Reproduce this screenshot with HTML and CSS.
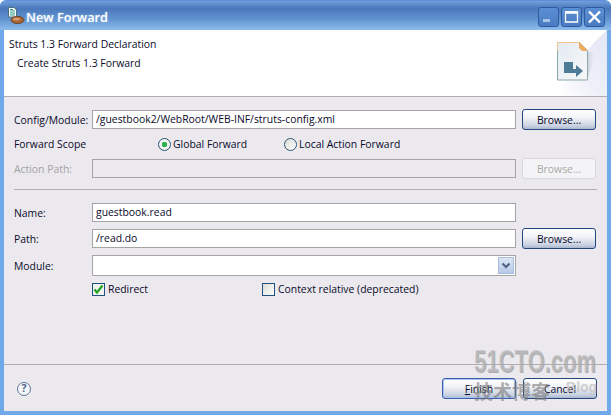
FILE: index.html
```html
<!DOCTYPE html>
<html lang="en">
<head>
<meta charset="utf-8">
<title>New Forward</title>
<link rel="stylesheet" href="styles.css">
</head>
<body>
<div class="window">
  <header class="titlebar">
    <svg class="app-icon" width="18" height="20" viewBox="0 0 18 20">
      <path d="M1.500 1.500H7l2.500 2.500V11H1.500z" fill="#fff" stroke="#4d6f7e"/>
      <path d="M3 5h5M3 7h5M3 9h5M3 3.500h3" stroke="#2a9a8a"/>
      <ellipse cx="10.500" cy="14" rx="6.500" ry="3.500" fill="#a9683a" stroke="#6e3f22"/>
      <ellipse cx="9.500" cy="13" rx="3.500" ry="1.300" fill="#d8a070"/>
    </svg>
    <span class="title">New Forward</span>
    <div class="controls">
      <span class="ctl"><svg width="21" height="20" viewBox="0 0 21 20"><rect x="5" y="12" width="7" height="3" fill="#a9c4e8"/></svg></span>
      <span class="ctl"><svg width="21" height="20" viewBox="0 0 21 20"><path d="M4.500 5h12v10h-12z" fill="none" stroke="#fff" stroke-width="1.300"/><path d="M4.500 5.500h12" stroke="#fff" stroke-width="2.500"/></svg></span>
      <span class="ctl"><svg width="21" height="20" viewBox="0 0 21 20"><path d="M5 4.500l11 11M16 4.500l-11 11" stroke="#fff" stroke-width="2.400"/></svg></span>
    </div>
  </header>
  <div class="client">
    <section class="banner">
      <div class="banner-text">
        <div class="banner-title">Struts 1.3 Forward Declaration</div>
        <div class="banner-sub">Create Struts 1.3 Forward</div>
      </div>
      <svg class="banner-art" width="70" height="66" viewBox="0 0 70 66">
        <defs>
          <linearGradient id="sweep" x1="0" y1="1" x2="1" y2="0">
            <stop offset="0" stop-color="#fff"/>
            <stop offset="0.450" stop-color="#eef0f9"/>
            <stop offset="1" stop-color="#e2e6f5"/>
          </linearGradient>
          <linearGradient id="page" x1="0" y1="0" x2="1" y2="1">
            <stop offset="0" stop-color="#e4ebf3"/>
            <stop offset="1" stop-color="#f7f7f7"/>
          </linearGradient>
          <linearGradient id="shade" x1="0" y1="0" x2="1" y2="0">
            <stop offset="0" stop-color="#c9cbd6"/>
            <stop offset="1" stop-color="#eef0f9" stop-opacity="0"/>
          </linearGradient>
        </defs>
        <path d="M22 66C28 46 52 16 70 0V66z" fill="url(#sweep)"/>
        <path d="M50 22h10L50 50z" fill="url(#shade)"/>
        <path d="M20.500 12.500h22l8 8v29.500h-30z" fill="url(#page)" stroke="#8ba8aa"/>
        <path d="M20.500 12.500h22M20.500 12.500v8" stroke="#f0c48c"/>
        <path d="M42 12l9 9h-6l-3-3z" fill="#f0ab5c"/>
        <path d="M27 32h9v7h3v-4l7 6-7 6v-4H27z" fill="#4f7b96"/>
      </svg>
    </section>
    <main class="body">
      <div class="form form-top">
        <label class="lbl">Config/Module:</label>
        <div class="field">/guestbook2/WebRoot/WEB-INF/struts-config.xml</div>
        <button class="btn">Browse...</button>

        <span class="lbl">Forward Scope</span>
        <div class="scope">
          <span class="opt opt-global"><span class="radio on"></span>Global Forward</span>
          <span class="opt"><span class="radio"></span>Local Action Forward</span>
        </div>

        <label class="lbl off">Action Path:</label>
        <div class="field field-off"></div>
        <button class="btn btn-off" disabled>Browse...</button>
      </div>
      <hr class="sep">
      <div class="form form-bottom">
        <label class="lbl">Name:</label>
        <div class="field">guestbook.read</div>
        <span></span>

        <label class="lbl">Path:</label>
        <div class="field">/read.do</div>
        <button class="btn">Browse...</button>

        <label class="lbl">Module:</label>
        <div class="field combo">
          <span class="combo-arrow"><svg width="16" height="17" viewBox="0 0 16 17"><path d="M4.500 6.500L8 10l3.500-3.500" fill="none" stroke="#4d6185" stroke-width="2"/></svg></span>
        </div>
        <span></span>

        <span></span>
        <div class="checks">
          <span class="opt opt-redirect"><span class="check on"><svg width="11" height="11" viewBox="0 0 11 11"><path d="M1.500 5.500l2.500 3 5.500-7" fill="none" stroke="#21a121" stroke-width="2.200"/></svg></span>Redirect</span>
          <span class="opt"><span class="check"></span>Context relative (deprecated)</span>
        </div>
        <span></span>
      </div>
    </main>
    <footer class="footer">
      <span class="help">?</span>
      <div class="actions">
        <button class="btn btn-default"><span><u>F</u>inish</span></button>
        <button class="btn">Cancel</button>
      </div>
    </footer>
  </div>
  <div class="watermark">
    <div class="wm-main">51CTO.com</div>
    <div class="wm-sub"><span class="wm-cn">技术博客</span><span class="wm-blog">Blog</span></div>
  </div>
</div>
</body>
</html>
```

FILE: styles.css
```css
* { box-sizing: border-box; }
html, body { margin: 0; padding: 0; }
body {
  width: 611px;
  height: 415px;
  overflow: hidden;
  background: #fff;
  font-family: "Open Sans", "Noto Sans", sans-serif;
  font-size: 10.4px;
  color: #0a0a2a;
}
.window {
  position: relative;
  width: 611px;
  height: 415px;
  display: flex;
  flex-direction: column;
  background: #6fa9ea;
  border-radius: 6px 6px 0 0;
  border-top: 1px solid #5f8fdc;
}
.titlebar {
  height: 29px;
  flex: none;
  display: flex;
  align-items: center;
  padding: 0 6px 0 7px;
  background: linear-gradient(#6fa0dc 0, #4a78bb 25%, #5f91cf 60%, #8dbcec 100%);
  border-radius: 6px 6px 0 0;
}
.app-icon { flex: none; margin-right: 1px; }
.title {
  font-family: "Open Sans", sans-serif;
  font-weight: 600;
  font-size: 12.700px;
  color: #fff;
  text-shadow: 0 0 2px #a9c8ee;
  margin-top: 2px;
}
.controls { margin-left: auto; display: flex; gap: 2px; margin-top: 3px; }
.ctl {
  width: 21px;
  height: 20px;
  border: 1px solid #2f5a9f;
  border-radius: 3px;
  background: linear-gradient(#5b8fd4, #4a7bc2);
  display: flex;
  align-items: center;
  justify-content: center;
}
.ctl svg { flex: none; margin: -1px; }
.client {
  flex: 1;
  margin: 0 4px 4px;
  display: flex;
  flex-direction: column;
  background: #ebe9ee;
  min-height: 0;
}
.banner {
  height: 67px;
  flex: none;
  background: #fff;
  border-bottom: 1px solid #aeaeae;
  position: relative;
  padding: 7px 5px;
}
.banner-title { line-height: 14px; }
.banner-sub { line-height: 14px; margin: 5px 0 0 8px; }
.banner-art { position: absolute; right: 0; top: 0; }
.body { flex: 1; padding: 12px 10px 0; }
.form {
  display: grid;
  grid-template-columns: 72px 424px 74px;
  column-gap: 6px;
  align-items: center;
}
.form-top { grid-template-rows: 21px 28px 21px; }
.form-bottom { grid-template-rows: 19px 21px 21px 14px; row-gap: 6px; }
.lbl { white-space: nowrap; }
.off { color: #a3a3a3; }
.field {
  height: 19px;
  background: #fff;
  border: 1px solid #a5a5a5;
  padding: 0 3px;
  line-height: 17px;
  white-space: nowrap;
}
.field-off { background: #ebe9ee; }
.combo { height: 21px; display: flex; justify-content: flex-end; padding: 1px; }
.combo-arrow {
  width: 16px;
  height: 17px;
  background: linear-gradient(#dbe5f5, #b8cbe8);
  border: 1px solid #a8bcdc;
  display: flex;
  align-items: center;
  justify-content: center;
}
.combo-arrow svg { flex: none; margin: -1px; }
.btn {
  width: 74px;
  height: 21px;
  padding: 0;
  font: inherit;
  color: #0a0a2a;
  background: linear-gradient(#fff 0, #f2f3f7 40%, #c8d0e0 85%, #a8b6ce 100%);
  border: 1px solid #24477f;
  border-radius: 3px;
}
.btn-off {
  color: #a8a8a8;
  background: #f4f4f6;
  border-color: #d8d8de;
}
.btn-default { border-color: #3a5fae; box-shadow: inset 0 0 0 1px #a9c2ee; }
.scope { grid-column: 2 / 4; display: flex; padding-left: 66px; }
.opt { display: flex; align-items: center; white-space: nowrap; }
.opt-global { width: 126px; }
.radio {
  width: 13px;
  height: 13px;
  flex: none;
  margin-right: 2px;
  border: 1px solid #2e5573;
  border-radius: 50%;
  background: linear-gradient(135deg, #dcdcd6, #fff);
}
.radio.on { background: radial-gradient(circle, #2fb04a 0 2.500px, #f2f2f2 3px); }
.checks { grid-column: 2 / 4; display: flex; }
.opt-redirect { width: 170px; }
.check {
  width: 13px;
  height: 13px;
  flex: none;
  margin-right: 3px;
  border: 1px solid #1c5180;
  background: linear-gradient(135deg, #dcdcd6, #fff);
  display: flex;
  align-items: center;
  justify-content: center;
}
.check svg { flex: none; }
.check.on { background: #f2f2ee; }
.sep { margin: 10px 0 13px 0; width: 583px; border: 0; border-top: 1px solid #aeaeae; height: 0; }
.footer {
  height: 47px;
  flex: none;
  border-top: 1px solid #aeaeae;
  display: flex;
  align-items: flex-start;
  justify-content: space-between;
  padding: 13px 10px 0 13px;
}
.help {
  width: 14px;
  height: 14px;
  margin-top: 4px;
  border: 1.500px solid #5f7795;
  border-radius: 50%;
  background: #f4f6fa;
  color: #4d6788;
  font-weight: 700;
  font-size: 10.500px;
  line-height: 11px;
  text-align: center;
}
.actions { display: flex; gap: 7px; }
.actions .btn { width: 74px; }
.watermark {
  position: absolute;
  left: 474px;
  top: 344px;
  color: rgba(190, 190, 190, 0.7);
  font-family: "Liberation Sans", "Noto Sans CJK SC", sans-serif;
  font-weight: 700;
  pointer-events: none;
  white-space: nowrap;
}
.wm-main {
  font-size: 31px;
  line-height: 33px;
  width: 124px;
  transform: scaleX(0.71);
  transform-origin: left center;
  text-shadow: 1px 1px 0 rgba(110,110,110,0.5);
}
.wm-sub { display: flex; align-items: flex-start; margin-top: 1px; }
.wm-cn { font-family: "Noto Sans CJK SC", sans-serif; font-size: 19px; line-height: 24px; color: rgba(120,120,120,0.6); }
.wm-blog { font-size: 14px; line-height: 16px; margin-left: 16px; }
```
